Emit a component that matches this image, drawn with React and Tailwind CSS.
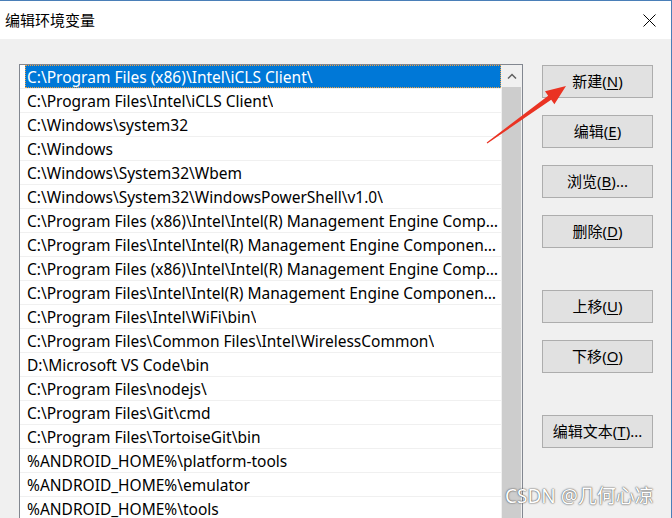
const paths = [
  'C:\\Program Files (x86)\\Intel\\iCLS Client\\',
  'C:\\Program Files\\Intel\\iCLS Client\\',
  'C:\\Windows\\system32',
  'C:\\Windows',
  'C:\\Windows\\System32\\Wbem',
  'C:\\Windows\\System32\\WindowsPowerShell\\v1.0\\',
  'C:\\Program Files (x86)\\Intel\\Intel(R) Management Engine Components\\DAL',
  'C:\\Program Files\\Intel\\Intel(R) Management Engine Components\\DAL',
  'C:\\Program Files (x86)\\Intel\\Intel(R) Management Engine Components\\IPT',
  'C:\\Program Files\\Intel\\Intel(R) Management Engine Components\\IPT',
  'C:\\Program Files\\Intel\\WiFi\\bin\\',
  'C:\\Program Files\\Common Files\\Intel\\WirelessCommon\\',
  'D:\\Microsoft VS Code\\bin',
  'C:\\Program Files\\nodejs\\',
  'C:\\Program Files\\Git\\cmd',
  'C:\\Program Files\\TortoiseGit\\bin',
  '%ANDROID_HOME%\\platform-tools',
  '%ANDROID_HOME%\\emulator',
  '%ANDROID_HOME%\\tools',
]

const buttons = [
  { label: '新建', key: 'N', mt: 'mt-0' },
  { label: '编辑', key: 'E', mt: 'mt-[17px]' },
  { label: '浏览', key: 'B', tail: '...', mt: 'mt-[17px]' },
  { label: '删除', key: 'D', mt: 'mt-[17px]' },
  { label: '上移', key: 'U', mt: 'mt-[42px]' },
  { label: '下移', key: 'O', mt: 'mt-[17px]' },
  { label: '编辑文本', key: 'T', tail: '...', mt: 'mt-[42px]' },
]

function WinButton({ label, k, tail, className }) {
  return (
    <button className={`w-[111px] h-[33px] border border-[#adadad] bg-[#e1e1e1] text-[15px] text-black flex items-center justify-center ${className}`}>
      {label}(<span className="underline underline-offset-2">{k}</span>){tail}
    </button>
  )
}

export default function App() {
  return (
    <div
      className="relative w-[672px] h-[518px] overflow-hidden bg-[#f0f0f0] border-t border-r border-[#4a7fb8]"
      style={{ fontFamily: '"Noto Sans", "Noto Sans CJK SC", sans-serif' }}
    >
      <div className="h-[38px] bg-white flex items-center justify-between pl-[5px] pr-[15px]">
        <span className="text-[15px] text-black">编辑环境变量</span>
        <svg width="13" height="13" viewBox="0 0 13 13">
          <path d="M0.5 0.5 L12.5 12.5 M12.5 0.5 L0.5 12.5" stroke="#000" strokeWidth="1" />
        </svg>
      </div>

      <div className="flex items-start pl-[19px] pt-[25px]">
        <div className="w-[504px] h-[480px] border border-[#828790] bg-white flex">
          <div className="w-[481px]">
            {paths.map((p, i) => (
              <div key={i} className="h-[24px] border-b border-[#f0f0f0] flex">
                {i === 0 ? (
                  <div className="ml-[5px] flex-1 min-w-0 bg-[#0078d7] text-white outline-1 outline-dotted outline-[#f0a040] -outline-offset-1 pl-[2px] pt-[3px] flex items-center">
                    <span className="truncate text-[15.5px]">{p}</span>
                  </div>
                ) : (
                  <div className="ml-[5px] flex-1 min-w-0 pl-[2px] pt-[3px] flex items-center text-black">
                    <span className="truncate text-[15.5px]">{p}</span>
                  </div>
                )}
              </div>
            ))}
          </div>
          <div className="w-[21px] bg-[#f0f0f0] flex flex-col">
            <div className="h-[22px] flex items-center justify-center">
              <svg width="10" height="6" viewBox="0 0 10 6">
                <path d="M1 5.5 L5 1.5 L9 5.5" fill="none" stroke="#606060" strokeWidth="1.5" />
              </svg>
            </div>
            <div className="mx-[1px] flex-1 bg-[#cdcdcd]" />
          </div>
        </div>

        <div className="ml-[19px] mt-[1px] flex flex-col">
          {buttons.map(b => (
            <WinButton key={b.key} label={b.label} k={b.key} tail={b.tail} className={b.mt} />
          ))}
        </div>
      </div>

      <svg className="absolute left-0 top-0 pointer-events-none" width="672" height="518">
        <polygon
          points="487.3,142.4 551.2,98.7 554.4,103.2 566,85 545,90.2 548.2,94.7 486.7,141.6"
          fill="#ea3323"
        />
      </svg>

      <div
        className="absolute left-[505px] top-[486px] text-[19px] text-white leading-none"
        style={{ textShadow: '0 0 2px #555, 0 0 1px #555' }}
      >
        CSDN @几何心凉
      </div>
    </div>
  )
}
